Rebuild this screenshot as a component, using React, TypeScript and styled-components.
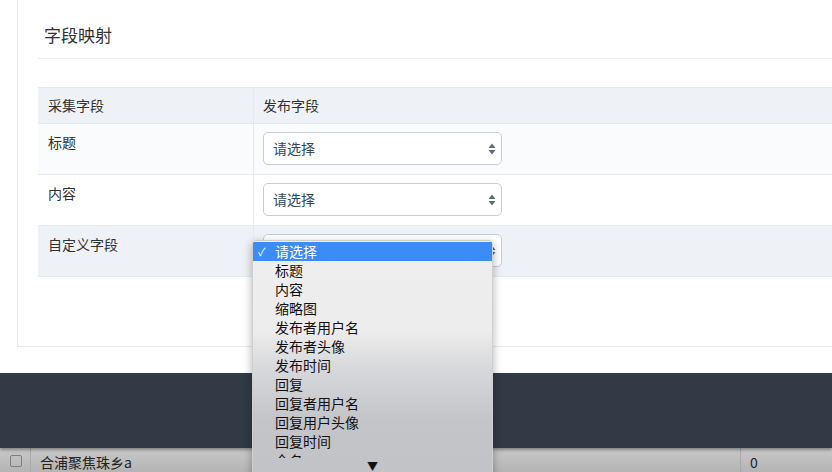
import React, { FC } from 'react';
import styled, { createGlobalStyle } from 'styled-components';

const GlobalStyle = createGlobalStyle`
  html, body {
    margin: 0;
    padding: 0;
    background: #fff;
  }
  body {
    font-family: "Noto Sans CJK SC", "Noto Sans", sans-serif;
    color: #303133;
  }
`;

const Page = styled.div`
  position: relative;
  width: 832px;
  height: 472px;
  overflow: hidden;
  display: flex;
  flex-direction: column;
`;

const Top = styled.div`
  padding-left: 17px;
  padding-bottom: 26px;
`;

const Card = styled.div`
  width: calc(100% + 40px);
  height: 347px;
  box-sizing: border-box;
  border-left: 1px solid #e8e8e8;
  border-bottom: 1px solid #e8e8e8;
  padding: 20px 0 0 20px;
`;

const Title = styled.div`
  font-size: 17px;
  line-height: 30px;
  color: #303133;
  padding: 0 0 8px 6px;
  border-bottom: 1px solid #ebeef2;
  margin-bottom: 28px;
`;

const Table = styled.div`
  display: grid;
  grid-template-columns: 216px 1fr;
  border-top: 1px solid #e6e9ee;
  font-size: 14px;
  color: #303133;
`;

const Row = styled.div<{ $bg: string; $head?: boolean }>`
  display: contents;
  & > div {
    background: ${p => p.$bg};
    height: ${p => (p.$head ? '35px' : '50px')};
    line-height: ${p => (p.$head ? '35px' : '20px')};
    border-bottom: 1px solid #e6e9ee;
  }
`;

const Cell = styled.div<{ $first?: boolean }>`
  padding: ${p => (p.$first ? '0 10px' : '0 9px')};
  box-sizing: content-box;
  border-right: ${p => (p.$first ? '1px solid #e6e9ee' : 'none')};
`;

const Label = styled.div`
  padding-top: 8px;
`;

const Select = styled.div`
  position: relative;
  margin-top: 8px;
  width: 239px;
  height: 33px;
  box-sizing: border-box;
  border: 1px solid #c8ccd3;
  border-radius: 5px;
  background: #fff;
  color: #34495e;
  line-height: 31px;
  padding-left: 9px;
`;

const Arrows = styled.svg`
  position: absolute;
  right: 5px;
  top: 10px;
`;

const Dark = styled.div`
  height: 80px;
  background: #323a46;
  box-shadow: 0 2px 3px rgba(0, 0, 0, 0.35);
  position: relative;
  z-index: 1;
`;

const ListRow = styled.div`
  flex: 1;
  display: grid;
  grid-template-columns: 31px 710px 1fr;
  background: linear-gradient(#c9c9c9, #b4b4b4);
  font-size: 14px;
  color: #222;
  font-family: "Noto Sans CJK SC", "Liberation Sans", sans-serif;
`;

const ListCell = styled.div<{ $last?: boolean }>`
  border-right: ${p => (p.$last ? 'none' : '1px solid #a9a9a9')};
  padding: 4px 0 0 9px;
`;

const CheckCell = styled.div`
  border-right: 1px solid #a9a9a9;
`;

const Check = styled.span`
  display: block;
  margin: 7px 0 0 10px;
  width: 10px;
  height: 10px;
  border: 1px solid #7d7d7d;
  border-radius: 2px;
`;

const Menu = styled.div`
  position: absolute;
  left: 252px;
  top: 240px;
  width: 241px;
  height: 240px;
  box-sizing: border-box;
  border: 1px solid #cfcfcf;
  border-radius: 4px 4px 0 0;
  background: linear-gradient(#efefef 0%, #ececec 38%, #d6d7da 55%, #c4c5c9 75%, #c2c3c7 100%);
  box-shadow: 0 3px 10px rgba(0, 0, 0, 0.3);
  padding-top: 1px;
  overflow: hidden;
  z-index: 5;
`;

const Items = styled.div`
  height: 216px;
  overflow: hidden;
`;

const Item = styled.div<{ $active?: boolean }>`
  height: 19px;
  line-height: 18px;
  font-size: 14px;
  padding-left: 22px;
  position: relative;
  color: ${p => (p.$active ? '#fff' : '#111')};
  background: ${p => (p.$active ? '#3b8cf8' : 'transparent')};
`;

const Tick = styled.span`
  position: absolute;
  left: 5px;
  top: 0;
  font-size: 11px;
`;

const ScrollDown = styled.div`
  text-align: center;
  font-size: 11px;
  line-height: 16px;
  color: #111;
`;

const rows = [
  { label: '标题', bg: '#fafbfc' },
  { label: '内容', bg: '#ffffff' },
  { label: '自定义字段', bg: '#eef1f6' },
];

const options = [
  '请选择', '标题', '内容', '缩略图', '发布者用户名', '发布者头像',
  '发布时间', '回复', '回复者用户名', '回复用户头像', '回复时间', '全名',
];

const SelectArrows: FC = () => (
  <Arrows width="8" height="12" viewBox="0 0 8 12">
    <path d="M4 0.5 L7.5 5 L0.5 5 Z" fill="#5b6b82" />
    <path d="M4 11.5 L7.5 7 L0.5 7 Z" fill="#5b6b82" />
  </Arrows>
);

const App: FC = () => (
  <>
    <GlobalStyle />
    <Page>
      <Top>
        <Card>
          <Title>字段映射</Title>
          <Table>
            <Row $bg="#eef1f6" $head>
              <Cell $first>采集字段</Cell>
              <Cell>发布字段</Cell>
            </Row>
            {rows.map(r => (
              <Row key={r.label} $bg={r.bg}>
                <Cell $first><Label>{r.label}</Label></Cell>
                <Cell>
                  <Select>请选择<SelectArrows /></Select>
                </Cell>
              </Row>
            ))}
          </Table>
        </Card>
      </Top>
      <Dark />
      <ListRow>
        <CheckCell><Check /></CheckCell>
        <ListCell>合浦聚焦珠乡a</ListCell>
        <ListCell $last>0</ListCell>
      </ListRow>
      <Menu>
        <Items>
          {options.map((o, i) => (
            <Item key={o} $active={i === 0}>
              {i === 0 && <Tick>✓</Tick>}
              {o}
            </Item>
          ))}
        </Items>
        <ScrollDown>▼</ScrollDown>
      </Menu>
    </Page>
  </>
);

export default App;
